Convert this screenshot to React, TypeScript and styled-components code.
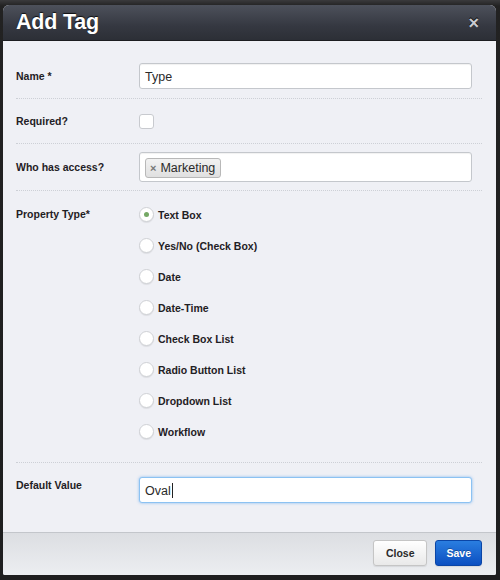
import React from "react";
import styled, { createGlobalStyle } from "styled-components";

const Global = createGlobalStyle`
  html, body { margin: 0; padding: 0; background: #2b2b2d; }
  body { font-family: "Liberation Sans", Arial, sans-serif; }
  * { box-sizing: border-box; }
`;

const Frame = styled.div`
  width: 500px;
  height: 580px;
  padding: 5px 4px 5px 3px;
  background: linear-gradient(#3a3a3c, #222 6px, #1e1e1f);
`;

const Modal = styled.div`
  width: 493px;
  height: 570px;
  display: flex;
  flex-direction: column;
  border-radius: 6px 6px 2px 2px;
  overflow: hidden;
  background: #eff0f5;
`;

const Header = styled.div`
  height: 36px;
  flex: none;
  display: flex;
  align-items: center;
  justify-content: space-between;
  padding: 0 17px 0 13px;
  background: linear-gradient(#4d515b, #353841 60%, #2c2f36);
  border-bottom: 1px solid #1c1d21;
`;

const Title = styled.h1`
  margin: 0;
  font-size: 21.5px;
  font-weight: bold;
  color: #ffffff;
  text-shadow: 0 -1px 1px rgba(0, 0, 0, 0.8);
  letter-spacing: -0.2px;
`;

const CloseX = styled.span`
  color: #c9cbd0;
  font-size: 18px;
  font-weight: bold;
  line-height: 1;
  text-shadow: 0 -1px 0 #000;
`;

const Body = styled.div`
  flex: 1;
  padding: 13px 14px 0 13px;
`;

const Row = styled.div<{ $align?: string; $pt?: number; $pb?: number; $last?: boolean }>`
  display: flex;
  align-items: ${(p) => p.$align || "center"};
  padding: ${(p) => p.$pt ?? 9}px 0 ${(p) => p.$pb ?? 9}px;
  border-bottom: ${(p) => (p.$last ? "none" : "1px dotted #cdd0d6")};
`;

const Label = styled.div<{ $mt?: number }>`
  width: 123px;
  flex: none;
  margin-top: ${(p) => p.$mt ?? 0}px;
  font-size: 10.5px;
  font-weight: bold;
  color: #1f2024;
`;

const Field = styled.div`
  width: 333px;
  min-height: 26px;
  display: flex;
  flex-direction: column;
  justify-content: center;
`;

const TextInput = styled.div<{ $focus?: boolean; $h?: number }>`
  height: ${(p) => p.$h ?? 26}px;
  display: flex;
  align-items: center;
  padding: 1px 5px 0;
  background: #ffffff;
  border: 1px solid ${(p) => (p.$focus ? "#8cc2f2" : "#c4c7cc")};
  border-radius: 3px;
  box-shadow: ${(p) =>
    p.$focus ? "0 0 3px rgba(90, 165, 240, 0.7)" : "inset 0 1px 1px rgba(0,0,0,0.06)"};
  font-size: 12.5px;
  color: #2a2a2a;
`;

const Caret = styled.span`
  display: inline-block;
  width: 1px;
  height: 15px;
  background: #222;
  margin-left: 1px;
`;

const Chip = styled.span`
  display: inline-flex;
  align-items: center;
  height: 20px;
  padding: 0 5px 0 4px;
  background: linear-gradient(#f2f2f2, #e0e0e0);
  border: 1px solid #b8b8b8;
  border-radius: 3px;
  font-size: 12.5px;
  color: #2a2a2a;
`;

const ChipX = styled.span`
  color: #777;
  font-size: 11px;
  font-weight: bold;
  margin-right: 4px;
`;

const CheckBox = styled.span`
  display: block;
  width: 15px;
  height: 15px;
  background: #fff;
  border: 1px solid #c8cacf;
  border-radius: 3px;
`;

const RadioList = styled.div`
  display: flex;
  flex-direction: column;
`;

const RadioItem = styled.div`
  height: 31px;
  display: flex;
  align-items: center;
  gap: 4px;
  font-size: 10.5px;
  font-weight: bold;
  color: #1f2024;
`;

const RadioCircle = styled.span<{ $on?: boolean }>`
  width: 15px;
  height: 15px;
  flex: none;
  display: flex;
  align-items: center;
  justify-content: center;
  border-radius: 50%;
  background: #fff;
  border: 1px solid #cfd1d5;
  box-shadow: 0 1px 1px rgba(0, 0, 0, 0.08);
  &::after {
    content: "";
    display: ${(p) => (p.$on ? "block" : "none")};
    width: 5px;
    height: 5px;
    border-radius: 50%;
    background: #75a865;
  }
`;

const Footer = styled.div`
  height: 43px;
  flex: none;
  display: flex;
  align-items: center;
  justify-content: flex-end;
  gap: 8px;
  padding: 0 14px 2px 0;
  border-top: 1px solid #c3c6cb;
  background: linear-gradient(#dcdee2, #eceef1);
`;

const Button = styled.button<{ $primary?: boolean }>`
  height: 26px;
  padding: 0 ${(p) => (p.$primary ? 10 : 12)}px;
  font-family: "Liberation Sans", Arial, sans-serif;
  font-size: 10.5px;
  font-weight: bold;
  border-radius: 3px;
  color: ${(p) => (p.$primary ? "#fff" : "#2a2a2a")};
  background: ${(p) =>
    p.$primary ? "linear-gradient(#2a7ee0, #0b4fc1)" : "linear-gradient(#ffffff, #e9e9e9)"};
  border: 1px solid ${(p) => (p.$primary ? "#0a45a6" : "#c5c5c5")};
  text-shadow: ${(p) => (p.$primary ? "0 -1px 0 rgba(0,0,0,0.3)" : "none")};
  box-shadow: 0 1px 1px rgba(0, 0, 0, 0.08);
`;

const types = [
  "Text Box",
  "Yes/No (Check Box)",
  "Date",
  "Date-Time",
  "Check Box List",
  "Radio Button List",
  "Dropdown List",
  "Workflow",
];

export default function App() {
  return (
    <Frame>
      <Global />
      <Modal>
        <Header>
          <Title>Add Tag</Title>
          <CloseX>×</CloseX>
        </Header>
        <Body>
          <Row>
            <Label>Name *</Label>
            <Field>
              <TextInput>Type</TextInput>
            </Field>
          </Row>
          <Row>
            <Label>Required?</Label>
            <Field>
              <CheckBox />
            </Field>
          </Row>
          <Row $pt={8} $pb={8}>
            <Label>Who has access?</Label>
            <Field>
              <TextInput $h={30}>
                <Chip>
                  <ChipX>×</ChipX>Marketing
                </Chip>
              </TextInput>
            </Field>
          </Row>
          <Row $align="flex-start" $pt={8} $pb={15}>
            <Label $mt={9}>Property Type*</Label>
            <RadioList>
              {types.map((t, i) => (
                <RadioItem key={t}>
                  <RadioCircle $on={i === 0} />
                  {t}
                </RadioItem>
              ))}
            </RadioList>
          </Row>
          <Row $align="flex-start" $pt={14} $last>
            <Label $mt={2}>Default Value</Label>
            <Field>
              <TextInput $focus>
                Oval
                <Caret />
              </TextInput>
            </Field>
          </Row>
        </Body>
        <Footer>
          <Button>Close</Button>
          <Button $primary>Save</Button>
        </Footer>
      </Modal>
    </Frame>
  );
}
